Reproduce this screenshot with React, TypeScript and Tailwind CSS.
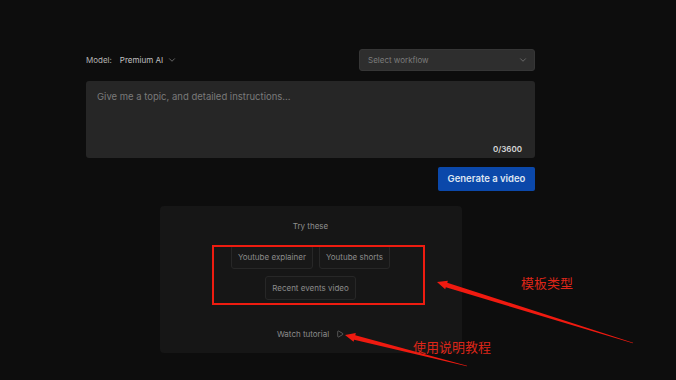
import React from 'react';
import { ChevronDown, Play } from 'lucide-react';

const font = { fontFamily: 'Inter, "Noto Sans CJK SC", sans-serif' };

// tapered annotation arrow: head at tip, thin tail
const arrowPoints = (tx: number, ty: number, ex: number, ey: number) => {
  const dx = ex - tx;
  const dy = ey - ty;
  const len = Math.hypot(dx, dy);
  const ux = dx / len;
  const uy = dy / len;
  const nx = -uy;
  const ny = ux;
  const hb = 10;
  const bx = tx + ux * hb;
  const by = ty + uy * hb;
  const pts = [
    [tx, ty],
    [bx + nx * 4.5, by + ny * 4.5],
    [bx + nx * 2.4, by + ny * 2.4],
    [ex + nx * 0.3, ey + ny * 0.3],
    [ex - nx * 0.3, ey - ny * 0.3],
    [bx - nx * 2.4, by - ny * 2.4],
    [bx - nx * 4.5, by - ny * 4.5],
  ];
  return pts.map((p) => p.join(',')).join(' ');
};

const Chip = ({ label }: { label: string }) => (
  <div className="h-[24px] px-[6px] flex items-center rounded-[3px] border border-[#272727] bg-[#181818] text-[8px] text-[#8b8b8b]">
    {label}
  </div>
);

export default function App() {
  return (
    <div className="relative w-[676px] h-[380px] overflow-hidden bg-[#0d0d0d]" style={font}>
      <div className="ml-[86px] w-[449px] pt-[49px]">
        {/* Model + workflow */}
        <div className="flex items-center justify-between h-[22px]">
          <div className="flex items-center text-[8px]">
            <span className="text-[#b4b4b4]">Model:</span>
            <span className="ml-[8px] text-[#c2c2c2]">Premium AI</span>
            <ChevronDown className="ml-[4px] w-[10px] h-[10px] text-[#9a9a9a]" strokeWidth={1.5} />
          </div>
          <div className="w-[176px] h-[22px] rounded-[3px] bg-[#2e2e2e] border border-[#363636] flex items-center justify-between pl-[8px] pr-[6px]">
            <span className="text-[8px] text-[#7c7c7c]">Select workflow</span>
            <ChevronDown className="w-[10px] h-[10px] text-[#8a8a8a]" strokeWidth={1.5} />
          </div>
        </div>

        {/* Prompt */}
        <div className="mt-[10px] h-[77px] rounded-[3px] bg-[#262626] flex flex-col justify-between px-[11px] pt-[9px] pb-[3px]">
          <span className="text-[9.5px] text-[#7a7a7a]">Give me a topic, and detailed instructions...</span>
          <span className="self-end text-[8px] font-semibold text-[#d6d6d6] pr-[2px]">0/3600</span>
        </div>

        <div className="mt-[9px] flex justify-end">
          <div className="w-[97px] h-[24px] rounded-[2px] bg-[#0b48aa] flex items-center justify-center text-[9.5px] font-semibold text-[#dfe6f2]">
            Generate a video
          </div>
        </div>

        {/* Suggestions card */}
        <div className="relative mx-auto mt-[15px] w-[302px] h-[147px] rounded-[4px] bg-[#161616] flex flex-col items-center">
          <span className="mt-[14px] text-[8px] text-[#8e8e8e]">Try these</span>
          <div className="mt-[13px] flex gap-[6px]">
            <Chip label="Youtube explainer" />
            <Chip label="Youtube shorts" />
          </div>
          <div className="mt-[7px]">
            <Chip label="Recent events video" />
          </div>
          <div className="mt-[28px] flex items-center gap-[7px] text-[8px] text-[#8b8b8b]">
            <span>Watch tutorial</span>
            <Play className="w-[8px] h-[8px] text-[#8b8b8b]" strokeWidth={1.6} />
          </div>
          <div className="absolute left-[52px] top-[39px] w-[213px] h-[60px] border-2 border-[#ee1c10]" />
        </div>
      </div>

      {/* annotations */}
      <svg className="absolute inset-0" width="676" height="380">
        <polygon points={arrowPoints(437, 282, 633, 343)} fill="#f01a10" />
        <polygon points={arrowPoints(345, 335, 467, 366)} fill="#f01a10" />
      </svg>
      <span className="absolute left-[521px] top-[274px] text-[13px] leading-[18px] text-[#dd2619]">模板类型</span>
      <span className="absolute left-[413px] top-[338px] text-[13px] leading-[18px] text-[#dd2619]">使用说明教程</span>
    </div>
  );
}
